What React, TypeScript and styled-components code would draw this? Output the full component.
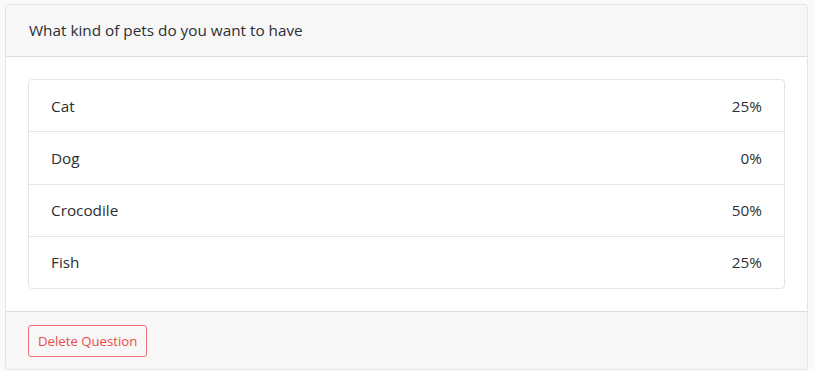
import styled, { createGlobalStyle } from 'styled-components'

const GlobalStyle = createGlobalStyle`
  html, body {
    margin: 0;
    padding: 0;
    background: #f8fafc;
  }
  body {
    font-family: "Open Sans", Lato, sans-serif;
    font-size: 15.3px;
    color: #2b2f33;
  }
`;

const Page = styled.div`
  padding: 4px 7px 0 5px;
`;

const Card = styled.div`
  border: 1px solid rgba(0, 0, 0, 0.1);
  border-radius: 4px;
  background: #fff;
  overflow: hidden;
`;

const CardHeader = styled.div`
  background: #f7f7f7;
  border-bottom: 1px solid rgba(0, 0, 0, 0.1);
  padding: 15px 22px 16px 23px;
  line-height: 20px;
`;

const CardBody = styled.div`
  padding: 22px;
`;

const ListGroup = styled.ul`
  list-style: none;
  margin: 0;
  padding: 0;
  border: 1px solid rgba(0, 0, 0, 0.1);
  border-radius: 4px;
`;

const ListItem = styled.li`
  display: flex;
  justify-content: space-between;
  align-items: center;
  height: 51.25px;
  padding: 0 22px;
  & + & {
    border-top: 1px solid rgba(0, 0, 0, 0.1);
  }
`;

const CardFooter = styled.div`
  background: #f7f7f7;
  border-top: 1px solid rgba(0, 0, 0, 0.1);
  padding: 13px 22px 12px 22px;
`;

const DangerButton = styled.button`
  display: block;
  font-family: inherit;
  font-size: 13.2px;
  color: #ec4a4a;
  background: transparent;
  border: 1px solid #f07171;
  border-radius: 3px;
  height: 32px;
  padding: 0 9px;
  cursor: pointer;
`;

const answers = [
  { label: 'Cat', percent: 25 },
  { label: 'Dog', percent: 0 },
  { label: 'Crocodile', percent: 50 },
  { label: 'Fish', percent: 25 },
];

const App = () => {
  return (
    <>
      <GlobalStyle />
      <Page>
        <Card>
          <CardHeader>What kind of pets do you want to have</CardHeader>
          <CardBody>
            <ListGroup>
              {answers.map((a) => (
                <ListItem key={a.label}>
                  <span>{a.label}</span>
                  <span>{a.percent}%</span>
                </ListItem>
              ))}
            </ListGroup>
          </CardBody>
          <CardFooter>
            <DangerButton>Delete Question</DangerButton>
          </CardFooter>
        </Card>
      </Page>
    </>
  )
}

export default App
